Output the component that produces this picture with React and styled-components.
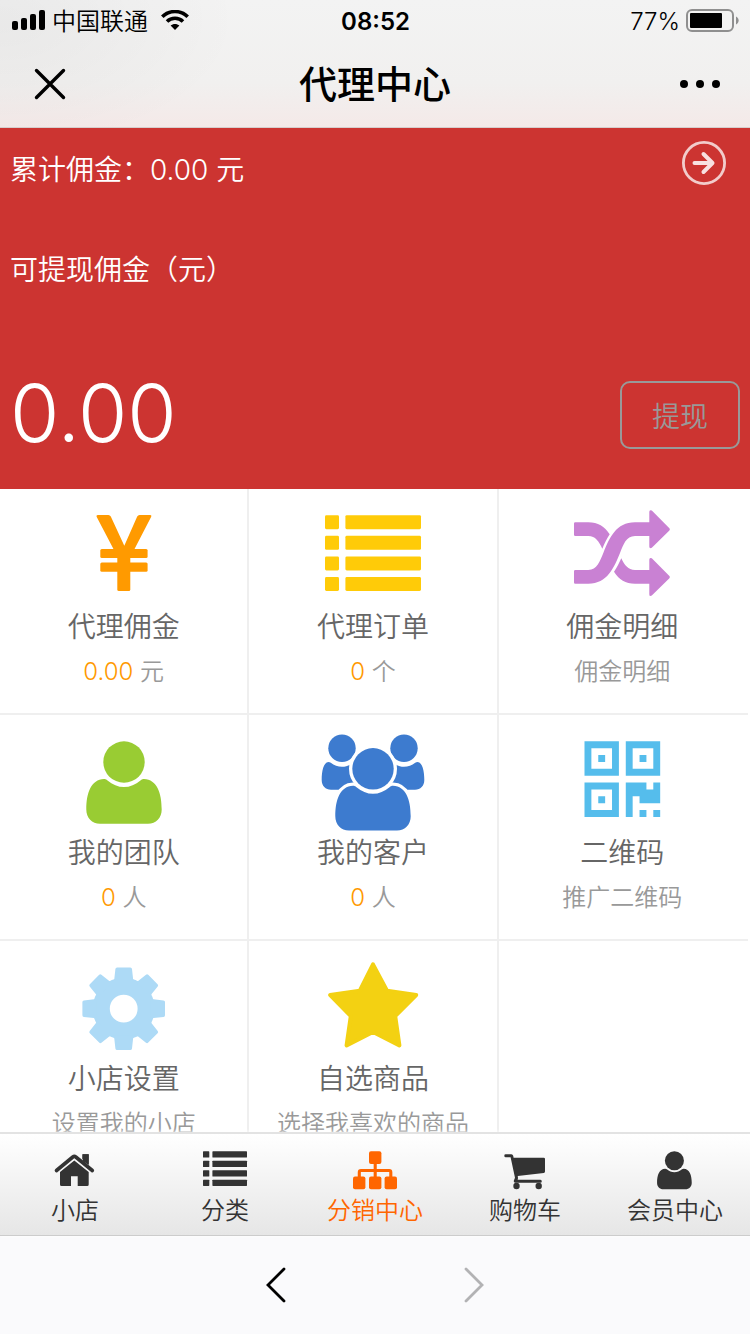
import styled, { createGlobalStyle } from "styled-components";

const GlobalStyle = createGlobalStyle`
  * {
    box-sizing: border-box;
  }
  body {
    margin: 0;
    background-color: #fff;
    font-family: Inter, "Noto Sans CJK SC", sans-serif;
    font-weight: 350;
  }
  a {
    color: inherit;
    text-decoration: none;
  }
  button {
    padding: 0;
    border: none;
    background: none;
    font: inherit;
    color: inherit;
    cursor: pointer;
  }
  svg {
    display: block;
  }
`;

const Page = styled.div`
  display: flex;
  flex-direction: column;
  height: 100vh;
`;

const TopBar = styled.header`
  flex-shrink: 0;
  color: #000;
  border-bottom: 1px solid #d6cecd;
  background:
    radial-gradient(ellipse 240px 130px at 0 20px, rgba(0, 0, 0, 0.04), transparent),
    linear-gradient(#f3f3f3, #f1f0ef 65%, #f4e9e8);
`;
const StatusBar = styled.div`
  display: grid;
  grid-template-columns: 1fr auto 1fr;
  align-items: center;
  height: 42px;
  padding: 0 11px 0 12px;
  font-size: 24px;
`;
const StatusGroup = styled.div`
  display: flex;
  align-items: center;
  justify-content: ${(props) => props.$align};
  gap: 6px;
`;
const Carrier = styled.span`
  margin-right: 7px;
  padding-bottom: 4px;
`;
const Clock = styled.time`
  font-weight: 600;
`;
const TitleBar = styled.div`
  display: flex;
  align-items: center;
  justify-content: space-between;
  height: 85px;
  padding: 0 20px 2px;
`;
const Title = styled.h1`
  margin: 0;
  padding-bottom: 4px;
  font-size: 38px;
  font-weight: 500;
`;
const IconButton = styled.button`
  display: flex;
  align-items: center;
  justify-content: center;
  width: 60px;
  height: 60px;
`;

const Content = styled.main`
  flex: 1;
  min-height: 0;
  overflow-y: auto;
  scrollbar-width: none;
`;

const Summary = styled.section`
  padding: 13px 10px 40px;
  color: #fff;
  background-color: #cc3431;
`;
const SummaryRow = styled.div`
  display: flex;
  align-items: flex-start;
  justify-content: space-between;
  margin-bottom: 42px;
  font-size: 28px;
  line-height: 58px;
`;
const DetailLink = styled.a`
  margin-right: 13px;
`;
const BalanceRow = styled.div`
  display: flex;
  align-items: center;
  justify-content: space-between;
  margin-top: 82px;
`;
const Balance = styled.strong`
  padding-bottom: 4px;
  font-size: 80px;
  font-weight: 300;
  line-height: 64px;
`;
const WithdrawButton = styled.button`
  width: 120px;
  height: 68px;
  border: 2px solid #999;
  border-radius: 10px;
  color: #999;
  font-size: 28px;
`;

const Grid = styled.nav`
  display: grid;
  grid-template-columns: repeat(3, 1fr);
  padding-right: 2px;
`;
const Tile = styled.a`
  display: flex;
  flex-direction: column;
  align-items: center;
  height: 226px;
  padding-top: 18px;
  border-right: 2px solid #efefef;
  border-bottom: 2px solid #efefef;
  &:nth-child(3n) {
    padding-right: 2px;
    border-right: none;
  }
`;
const TileName = styled.span`
  margin-top: -2px;
  color: #666;
  font-size: 28px;
  line-height: 44px;
`;
const TileNote = styled.span`
  color: #999;
  font-size: 24px;
  line-height: 46px;
`;
const Count = styled.span`
  color: #f90;
`;

const TabBar = styled.nav`
  position: relative;
  display: flex;
  flex-shrink: 0;
  height: 104px;
  border-top: 2px solid #e3e3e3;
  border-bottom: 1px solid #ccc;
  background: linear-gradient(#fff, #e6e6e6);
  box-shadow: 0 0 4px #fff;
`;
const Tab = styled.a`
  display: flex;
  flex: 1;
  flex-direction: column;
  align-items: center;
  padding-top: 15px;
  color: ${(props) => (props.$active ? "#f60" : "#333")};
  font-size: 24px;
  line-height: 40px;
`;

const BrowserBar = styled.footer`
  display: flex;
  flex-shrink: 0;
  align-items: center;
  justify-content: center;
  gap: 138px;
  height: 98px;
  color: #000;
  background-color: #fafafc;
  button:disabled {
    color: #b2b2b4;
  }
`;

const SignalIcon = () => (
  <svg width="34" height="22" viewBox="0 0 34 22" aria-hidden="true">
    <rect x="0" y="11" width="6" height="9" rx="2" />
    <rect x="9" y="8" width="6" height="12" rx="2" />
    <rect x="18" y="4" width="6" height="16" rx="2" />
    <rect x="27" y="0" width="6" height="20" rx="2" />
  </svg>
);

const WifiIcon = () => (
  <svg width="28" height="22" viewBox="0 0 28 22" aria-hidden="true">
    <g fill="none" stroke="#000" strokeWidth="3.6">
      <path d="M1.3 6.8C8.3 -0.2 19.7 -0.2 26.7 6.8" />
      <path d="M6 11.5C10.4 7.2 17.6 7.2 22 11.5" />
    </g>
    <path d="M14 20L9.6 15.6C12 13.4 16 13.4 18.4 15.6Z" />
  </svg>
);

const BatteryIcon = () => (
  <svg width="53" height="24" viewBox="0 0 53 24" aria-hidden="true">
    <rect x="1" y="1" width="46" height="21" rx="5" fill="none" stroke="#8f8f8f" strokeWidth="2" />
    <rect x="4" y="4" width="32" height="15" rx="1" />
    <path d="M50 7.5C53.5 9 53.5 14 50 15.5Z" fill="#8f8f8f" />
  </svg>
);

const CloseIcon = () => (
  <svg width="32" height="32" viewBox="0 0 32 32" aria-hidden="true">
    <path d="M2.5 2.5L29.5 29.5M29.5 2.5L2.5 29.5" stroke="#000" strokeWidth="3.4" strokeLinecap="round" />
  </svg>
);

const MoreIcon = () => (
  <svg width="40" height="8" viewBox="0 0 40 8" aria-hidden="true">
    <circle cx="4" cy="4" r="4" />
    <circle cx="20" cy="4" r="4" />
    <circle cx="36" cy="4" r="4" />
  </svg>
);

const ArrowCircleIcon = () => (
  <svg width="46" height="46" viewBox="0 0 46 46" fill="none" stroke="#fff" aria-hidden="true">
    <circle cx="23" cy="22" r="20.6" strokeWidth="2.8" opacity="0.75" />
    <path d="M13.5 22H31M22.5 13L31.5 22L22.5 31" strokeWidth="4" strokeLinecap="round" strokeLinejoin="round" opacity="0.85" />
  </svg>
);

const ChevronIcon = ({ d }) => (
  <svg width="20" height="36" viewBox="0 0 20 36" fill="none" aria-hidden="true">
    <path d={d} stroke="currentColor" strokeWidth="2.8" strokeLinecap="round" />
  </svg>
);

const TileIcon = ({ color, children }) => (
  <svg width="110" height="100" viewBox="0 0 110 100" fill={color} aria-hidden="true">
    {children}
  </svg>
);

const TabIcon = ({ children }) => (
  <svg width="60" height="42" viewBox="0 0 60 42" fill="currentColor" aria-hidden="true">
    {children}
  </svg>
);

const BODY =
  "M35 46C22 46.5 17.3 60 17.3 76.5C17.3 85 23 90.7 31 90.7H79C87 90.7 92.7 85 92.7 76.5C92.7 60 88 46.5 75 46C73.5 46 72.5 46.6 71.5 47.4C66.5 51.5 61 54 55 54C49 54 43.5 51.5 38.5 47.4C37.5 46.6 36.5 46 35 46Z";

const Person = () => (
  <>
    <circle cx="55" cy="29" r="20.7" />
    <path d={BODY} />
  </>
);

const SIDE_BODY =
  "M10.5 29C5.5 29.5 3.7 38 3.7 47C3.7 53 7.5 56.7 13 56.7H36V31.5H32.5C29.5 33.2 27 33.8 24 33.8C20 33.8 16 32.5 12.8 29.8C12 29.2 11.3 29 10.5 29Z";

const People = () => (
  <>
    <circle cx="24" cy="15.3" r="13.7" />
    <circle cx="86" cy="15.3" r="13.7" />
    <path d={SIDE_BODY} />
    <path d={SIDE_BODY} transform="translate(110 0) scale(-1 1)" />
    <g transform="translate(0 6.8)">
      <g stroke="#fff" strokeWidth="6.6">
        <Person />
      </g>
      <Person />
    </g>
  </>
);

const Yen = () => (
  <>
    <path d="M28.8 8H39.4Q41 8 41.8 9.5L55.3 38.7L68.2 9.5Q69 8 70.5 8H81.2Q83 8 82.2 9.8L65 43H45L27.6 9.8Q27 8 28.8 8Z" />
    <rect x="31.3" y="42" width="47.3" height="9" rx="1.5" />
    <rect x="31.3" y="55.4" width="47.3" height="9.4" rx="1.5" />
    <path d="M48.3 40H61.3V82.5Q61.3 84 59.8 84H49.8Q48.3 84 48.3 82.5Z" />
  </>
);

const Rows = ({ x, y, bar, width, size, step, radius }) =>
  [0, 1, 2, 3].map((i) => (
    <g key={i}>
      <rect x={x} y={y + i * step} width={size} height={size} rx={radius} />
      <rect x={bar} y={y + i * step} width={width} height={size} rx={radius} />
    </g>
  ));

const Shuffle = () => (
  <>
    <path d="M8.3 15.3H21.3C31 15.3 37.5 19.5 42.7 27.3C40 31.5 37.5 36.5 35.3 41.7C32 34.5 28.5 29 21.3 29H8.3Q7 29 7 27.7V16.6Q7 15.3 8.3 15.3Z" />
    <path d="M8.3 63H21.3C30 63 33 54 36.5 45.5C42.5 31 49 15.3 68 15.3H82.3V5Q82.3 2.3 84.8 3.6L102.4 21.2Q103.4 22.3 102.4 23.4L84.8 40.8Q82.3 42 82.3 39.4V29H68C59 29 56.5 37.5 53 46C47 60.5 40.5 76.7 21.3 76.7H8.3Q7 76.7 7 75.4V64.3Q7 63 8.3 63Z" />
    <path d="M54.3 51.3C57.5 58 61 63 68 63H82.3V52.7Q82.3 50 84.8 51.3L102.4 69Q103.4 70.1 102.4 71.2L84.8 88.6Q82.3 90 82.3 87.2V76.7H68C58.5 76.7 52 72.5 47 64.7C50 60.5 52 56 54.3 51.3Z" />
  </>
);

const QrCode = () => (
  <g transform="translate(17.5 8.3) scale(6.88)" fillRule="evenodd">
    <path d="M0 0H5V5H0ZM1 1V4H4V1ZM2 2H3V3H2Z" />
    <path d="M6 0H11V5H6ZM7 1V4H10V1ZM8 2H9V3H8Z" />
    <path d="M0 6H5V11H0ZM1 7V10H4V7ZM2 8H3V9H2Z" />
    <path d="M6 6H9V7H10V6H11V9H8V8H7V11H6ZM8 10H9V11H8ZM10 10H11V11H10Z" />
  </g>
);

const Gear = () => (
  <g transform="translate(54.7 49.7)">
    <circle r="22.4" fill="none" stroke="#addaf6" strokeWidth="17" />
    {[0, 45, 90, 135, 180, 225, 270, 315].map((angle) => (
      <path
        key={angle}
        transform={`rotate(${angle})`}
        d="M-11 -27L-9.4 -29.8L-8.3 -39.8Q-8.1 -41.3 -6.6 -41.3H6.6Q8.1 -41.3 8.3 -39.8L9.4 -29.8L11 -27Z"
      />
    ))}
  </g>
);

const Star = () => (
  <path
    d="M55 5.4L69 31.7L98.2 36L77.2 57L81.4 86.4L55 73L28.6 86.4L32.8 57L12.2 36L41.8 31.7Z"
    stroke="#f3d112"
    strokeWidth="4"
    strokeLinejoin="round"
  />
);

const Home = () => (
  <>
    <path d="M29.3 11.4L43.7 23V35.5Q43.7 37 42.2 37H32.7V27.3H26V37H16.5Q15 37 15 35.5V23Z" />
    <path d="M37.3 5.3H43.7V17L37.3 12Z" />
    <path d="M11.3 21.8L29.3 7L47.5 21.8" fill="none" stroke="#f6f6f6" strokeWidth="5.4" />
    <path d="M37.8 5.3H43.7V16L37.8 12Z" />
    <path d="M11.5 21.5L27.8 8Q29.3 6.9 30.8 8L47.3 21.5" fill="none" stroke="currentColor" strokeWidth="3.6" strokeLinecap="round" />
  </>
);

const Sitemap = () => (
  <>
    <rect x="24" y="2.3" width="12.4" height="12.6" rx="2" />
    <rect x="8" y="27.6" width="12.4" height="12.6" rx="2" />
    <rect x="24" y="27.6" width="12.4" height="12.6" rx="2" />
    <rect x="39.6" y="27.6" width="12.4" height="12.6" rx="2" />
    <path d="M14.3 28V23.2Q14.3 21.5 16 21.5H44.2Q45.8 21.5 45.8 23.2V28M30.2 14V28" fill="none" stroke="currentColor" strokeWidth="3.1" />
  </>
);

const Cart = () => (
  <>
    <path d="M10.7 5.3H16.4Q17.8 5.3 18.2 6.8L18.6 8.7H48.8Q50 8.7 50 10V22.4Q50 23.7 48.8 23.9L22.7 27Q23.3 29.5 22.6 30.7H45.4Q46.8 30.7 46.8 32.2Q46.8 33.7 45.4 33.7H20.2Q18.5 33.7 18.8 31.8L20 28.7L15.6 8.2H10.7Q9.3 8.2 9.3 6.7Q9.3 5.3 10.7 5.3Z" />
    <circle cx="21.5" cy="37" r="3.2" />
    <circle cx="43.7" cy="37" r="3.2" />
  </>
);

const tiles = [
  { name: "代理佣金", count: "0.00", note: "元", color: "#ff9a00", icon: <Yen /> },
  {
    name: "代理订单",
    count: "0",
    note: "个",
    color: "#ffcb08",
    icon: <Rows x={7} y={8.2} bar={27.4} width={75.6} size={14} step={20.6} radius={1.4} />,
  },
  { name: "佣金明细", note: "佣金明细", color: "#c981d3", icon: <Shuffle /> },
  { name: "我的团队", count: "0", note: "人", color: "#9c3", icon: <Person /> },
  { name: "我的客户", count: "0", note: "人", color: "#3d7bcf", icon: <People /> },
  { name: "二维码", note: "推广二维码", color: "#55bdec", icon: <QrCode /> },
  { name: "小店设置", note: "设置我的小店", color: "#addaf6", icon: <Gear /> },
  { name: "自选商品", note: "选择我喜欢的商品", color: "#f3d112", icon: <Star /> },
];

const tabs = [
  { name: "小店", icon: <Home /> },
  {
    name: "分类",
    icon: <Rows x={8} y={2.3} bar={17.4} width={34.6} size={6.3} step={9.45} radius={0.6} />,
  },
  { name: "分销中心", icon: <Sitemap />, active: true },
  { name: "购物车", icon: <Cart /> },
  {
    name: "会员中心",
    icon: (
      <g transform="translate(4.1 -1.5) scale(0.46)">
        <Person />
      </g>
    ),
  },
];

const App = () => {
  return (
    <Page>
      <GlobalStyle />
      <TopBar>
        <StatusBar>
          <StatusGroup $align="flex-start">
            <SignalIcon />
            <Carrier>中国联通</Carrier>
            <WifiIcon />
          </StatusGroup>
          <Clock>08:52</Clock>
          <StatusGroup $align="flex-end">
            <span>77%</span>
            <BatteryIcon />
          </StatusGroup>
        </StatusBar>
        <TitleBar>
          <IconButton aria-label="关闭">
            <CloseIcon />
          </IconButton>
          <Title>代理中心</Title>
          <IconButton aria-label="更多">
            <MoreIcon />
          </IconButton>
        </TitleBar>
      </TopBar>

      <Content>
        <Summary>
          <SummaryRow>
            <span>累计佣金：0.00 元</span>
            <DetailLink href="#detail" aria-label="佣金明细">
              <ArrowCircleIcon />
            </DetailLink>
          </SummaryRow>
          <SummaryRow>可提现佣金（元）</SummaryRow>
          <BalanceRow>
            <Balance>0.00</Balance>
            <WithdrawButton>提现</WithdrawButton>
          </BalanceRow>
        </Summary>
        <Grid>
          {tiles.map((tile) => (
            <Tile key={tile.name} href="#tile">
              <TileIcon color={tile.color}>{tile.icon}</TileIcon>
              <TileName>{tile.name}</TileName>
              <TileNote>
                {tile.count && <Count>{tile.count} </Count>}
                {tile.note}
              </TileNote>
            </Tile>
          ))}
          <Tile as="div" />
        </Grid>
      </Content>

      <TabBar>
        {tabs.map((tab) => (
          <Tab key={tab.name} href="#tab" $active={tab.active}>
            <TabIcon>{tab.icon}</TabIcon>
            {tab.name}
          </Tab>
        ))}
      </TabBar>
      <BrowserBar>
        <IconButton aria-label="后退">
          <ChevronIcon d="M18 2L2 18L18 34" />
        </IconButton>
        <IconButton aria-label="前进" disabled>
          <ChevronIcon d="M2 2L18 18L2 34" />
        </IconButton>
      </BrowserBar>
    </Page>
  );
};

export default App;
